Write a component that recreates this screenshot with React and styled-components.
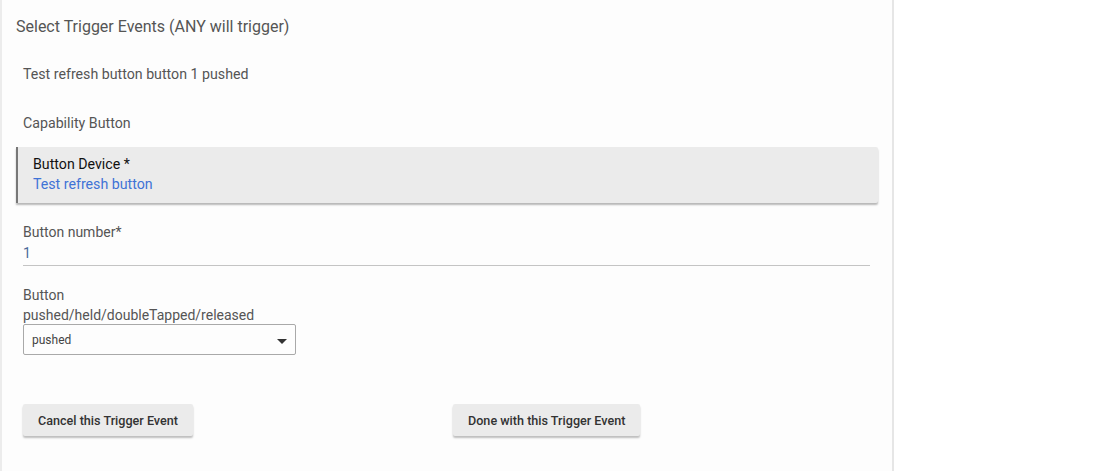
import React from 'react'
import styled, {createGlobalStyle} from 'styled-components'

const Global = createGlobalStyle`
  html, body { margin:0; padding:0; background:#fff; }
  body { font-family: Roboto, "Liberation Sans", Arial, sans-serif; overflow:hidden; }
`

export default function App(){
  return <>
    <Global />
    <Card>
      <Title>Select Trigger Events (ANY will trigger)</Title>
      <Body>
        <Note>Test refresh button button 1 pushed</Note>
        <Note $gap>Capability Button</Note>
        <DeviceBox>
          <DeviceLabel>Button Device *</DeviceLabel>
          <DeviceValue>Test refresh button</DeviceValue>
        </DeviceBox>
        <Field>
          <FieldLabel>Button number*</FieldLabel>
          <TextInput>1</TextInput>
        </Field>
        <Field $top={19}>
          <FieldLabel>Button</FieldLabel>
          <FieldLabel>pushed/held/doubleTapped/released</FieldLabel>
          <Select>
            pushed
            <Caret viewBox="0 0 10 5"><path d="M0 0h10L5 5z" fill="#333" /></Caret>
          </Select>
        </Field>
        <Actions>
          <div><ActionButton>Cancel this Trigger Event</ActionButton></div>
          <div><ActionButton>Done with this Trigger Event</ActionButton></div>
        </Actions>
      </Body>
    </Card>
  </>
}

const Card = styled.div`
  width:894px;
  height:471px;
  background:#fdfdfd;
  border-left:2px solid #ececec;
  border-right:2px solid #e6e6e6;
  box-sizing:border-box;
`
const Title = styled.div`
  padding:17px 0 0 14px;
  font-size:16px;
  line-height:20px;
  color:#555;
`
const Body = styled.div`
  padding:0 14px 0 14px;
`
const Note = styled.div`
  padding:${p=>p.$gap ? '29px' : '27px'} 0 0 7px;
  font-size:14.2px;
  line-height:20px;
  color:#555;
`
const DeviceBox = styled.div`
  margin-top:14px;
  height:56px;
  box-sizing:border-box;
  padding:7px 15px 0;
  background:#ebebeb;
  border-left:2px solid #777;
  border-radius:0 2px 2px 0;
  box-shadow:0 2px 2px rgba(0,0,0,0.28);
`
const DeviceLabel = styled.div`
  font-size:14.2px;
  line-height:20px;
  color:#111;
`
const DeviceValue = styled.div`
  font-size:14.2px;
  line-height:20px;
  color:#3f73d6;
`
const Field = styled.div`
  margin-top:${p=>p.$top ?? 19}px;
  padding-left:7px;
  margin-right:8px;
`
const FieldLabel = styled.div`
  font-size:14px;
  line-height:20px;
  color:#555;
`
const TextInput = styled.div`
  font-size:14px;
  line-height:23px;
  color:#4a6a9a;
  border-bottom:1px solid #c4c4c4;
`
const Select = styled.div`
  margin-top:-1px;
  width:273px;
  height:31px;
  box-sizing:border-box;
  border:1px solid #a9a9a9;
  border-radius:2px;
  padding:0 8px;
  display:flex;
  align-items:center;
  justify-content:space-between;
  font-size:12px;
  color:#444;
  line-height:28px;
`
const Caret = styled.svg`
  width:10px;
  height:5px;
  margin-top:4px;
`
const Actions = styled.div`
  margin-top:49px;
  padding-left:7px;
  display:grid;
  grid-template-columns:430px 1fr;
`
const ActionButton = styled.button`
  height:32px;
  padding:0 15px;
  border:none;
  border-radius:2px;
  background:#ebebeb;
  box-shadow:0 2px 2px rgba(0,0,0,0.25);
  font-family:Roboto, "Liberation Sans", Arial, sans-serif;
  font-size:12.6px;
  font-weight:500;
  color:#333;
`
